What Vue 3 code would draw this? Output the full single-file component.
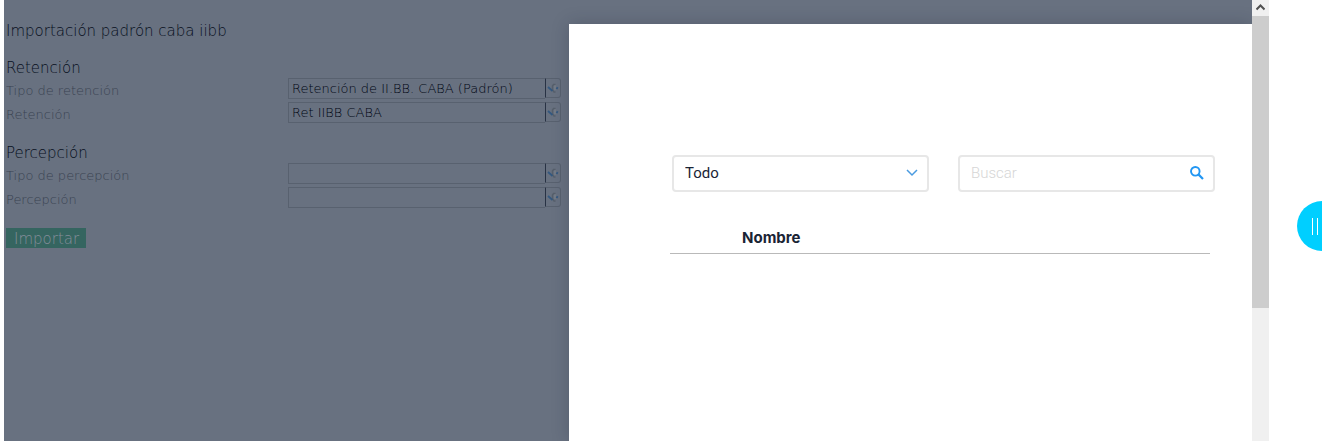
<script setup>
import { ref } from 'vue'

const groups = ref([
  {
    title: 'Retención',
    fields: [
      { id: 'tipo-retencion', label: 'Tipo de retención', value: 'Retención de II.BB. CABA (Padrón)' },
      { id: 'retencion', label: 'Retención', value: 'Ret IIBB CABA' },
    ],
  },
  {
    title: 'Percepción',
    fields: [
      { id: 'tipo-percepcion', label: 'Tipo de percepción', value: '' },
      { id: 'percepcion', label: 'Percepción', value: '' },
    ],
  },
])
const filter = ref('Todo')
const query = ref('')
</script>

<template>
  <div class="screen">
    <div class="viewport">
      <form class="import-form" @submit.prevent>
        <h1 class="heading">Importación padrón caba iibb</h1>
        <section v-for="group in groups" :key="group.title" class="group">
          <h2 class="heading">{{ group.title }}</h2>
          <div v-for="field in group.fields" :key="field.id" class="row">
            <label :for="field.id">{{ field.label }}</label>
            <div class="lookup">
              <input :id="field.id" v-model="field.value" type="text" />
              <button type="button" class="lookup-btn" :aria-label="'Buscar ' + field.label">
                <svg width="12" height="11" viewBox="0 0 12 11" fill="none">
                  <path d="M7 2h2v5H7z" fill="#737b87" />
                  <path d="M8.500 1.500H6.500L5.500 3v3.500l1.500 2.500h1.500" stroke="#565f6b" stroke-width="1.400" />
                  <path d="M1 4l4.500 4M9.500 6l1.200-1.800" stroke="#34587f" stroke-width="1.800" />
                </svg>
              </button>
            </div>
          </div>
        </section>
        <button type="submit" class="submit">Importar</button>
      </form>

      <main class="dialog">
        <div class="filters">
          <div class="control">
            <select v-model="filter" aria-label="Filtro">
              <option>Todo</option>
            </select>
            <svg class="chevron" width="12" height="8" viewBox="0 0 12 8" fill="none" stroke="#4a9be0" stroke-width="1.500">
              <path d="M1 1l5 5 5-5" />
            </svg>
          </div>
          <div class="control">
            <input v-model="query" type="text" placeholder="Buscar" aria-label="Buscar" />
            <svg class="lens" width="14" height="14" viewBox="0 0 14 14" fill="none" stroke="#2196f3" stroke-width="1.900">
              <circle cx="5.300" cy="5.300" r="4.300" />
              <path d="M8.400 8.400l4.600 4.600" stroke-width="2.200" />
            </svg>
          </div>
        </div>
        <table class="results">
          <thead>
            <tr><th scope="col">Nombre</th></tr>
          </thead>
        </table>
      </main>
    </div>

    <div class="scrollbar" aria-hidden="true">
      <div class="scroll-up">
        <svg width="9" height="7" viewBox="0 0 9 7" fill="none" stroke="#505050" stroke-width="2">
          <path d="M0.500 5.500l4-4 4 4" />
        </svg>
      </div>
      <div class="thumb"></div>
    </div>

    <div class="gutter">
      <button type="button" class="handle" aria-label="Abrir panel"><i></i><i></i></button>
    </div>
  </div>
</template>

<style>
body {
  margin: 0;
  background: #fff;
}
</style>

<style scoped>
* {
  box-sizing: border-box;
}
.screen {
  display: flex;
  height: 100vh;
  padding-left: 4px;
  overflow: hidden;
}
.viewport {
  display: flex;
  flex: 1;
  min-width: 0;
  overflow: hidden;
  background: #687180;
}
.import-form {
  flex: 0 0 565px;
  padding: 21px 8px 0 2px;
  font-family: "DejaVu Sans", Verdana, sans-serif;
  font-weight: 200;
  color: #070f1d;
}
.heading {
  margin: 0;
  font-size: 15px;
  line-height: 20px;
  font-weight: 200;
}
.group {
  margin-top: 17px;
}
.row {
  display: flex;
  align-items: flex-start;
  height: 24px;
}
.row label {
  width: 282px;
  padding-top: 3px;
  font-size: 13px;
  line-height: 20px;
  color: #3a4352;
}
.lookup {
  display: flex;
  flex: 1;
  height: 21px;
}
.lookup input {
  flex: 1;
  min-width: 0;
  padding: 0 3px;
  border: 1px solid #58616f;
  border-right: 0;
  background: transparent;
  font: 200 13px "DejaVu Sans", Verdana, sans-serif;
  color: #000613;
  outline: 0;
}
.lookup-btn {
  display: flex;
  align-items: center;
  justify-content: center;
  width: 16px;
  height: 20px;
  padding: 0;
  border: 1px solid #58616f;
  border-left-color: #283244;
  border-radius: 0 3px 3px 0;
  background: transparent;
}
.submit {
  display: block;
  height: 20px;
  margin-top: 17px;
  padding: 1px 7px 0 8px;
  border: 0;
  background: #356560;
  font: 200 15px/20px "DejaVu Sans", Verdana, sans-serif;
  color: #848d9a;
}
.dialog {
  flex: 1;
  min-width: 0;
  margin-top: 24px;
  padding: 131px 37px 0 101px;
  background: #fff;
  box-shadow: 0 0 16px rgba(26, 36, 53, 0.25);
  font-family: Roboto, sans-serif;
  color: #1a2435;
}
.filters {
  display: flex;
  gap: 29px;
  padding-left: 2px;
}
.control {
  display: flex;
  align-items: center;
  flex: 1;
  min-width: 0;
  height: 37px;
  padding: 0 9px 2px 11px;
  border: 2px solid #e7e7e7;
  border-radius: 4px;
}
.control select,
.control input {
  flex: 1;
  min-width: 0;
  padding: 0;
  border: 0;
  outline: 0;
  appearance: none;
  background: transparent;
  font: 15px Roboto, sans-serif;
  color: #1a2435;
}
.control input {
  font-weight: 300;
}
.control input::placeholder {
  color: #d6d6d6;
}
.results {
  width: calc(100% - 5px);
  margin-top: 36px;
  border-collapse: collapse;
}
.results th {
  padding: 0 0 5px 72px;
  border-bottom: 1px solid #b9b9b9;
  text-align: left;
  font: 700 15px/20px Inter, sans-serif;
}
.scrollbar {
  width: 17px;
  background: #f0f0f0;
}
.scroll-up {
  display: flex;
  align-items: center;
  justify-content: center;
  height: 16px;
  padding-bottom: 2px;
}
.thumb {
  height: 292px;
  background: #cdcdcd;
}
.gutter {
  width: 53px;
  padding: 201px 0 0 28px;
  overflow: hidden;
}
.handle {
  display: flex;
  align-items: center;
  gap: 4px;
  width: 50px;
  height: 50px;
  padding: 0 0 0 15px;
  border: 0;
  border-radius: 50%;
  background: #00cfff;
}
.handle i {
  width: 1px;
  height: 17px;
  background: #fff;
}
</style>
